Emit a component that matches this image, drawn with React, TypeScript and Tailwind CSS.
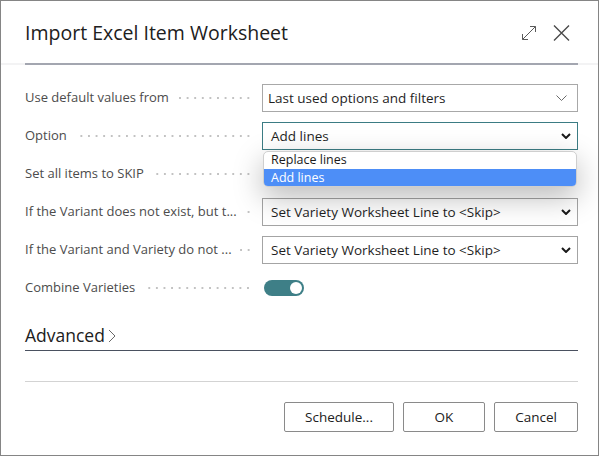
import React from 'react'

const font = "font-['Open_Sans','Noto_Sans',sans-serif]"

function Leader() {
  return (
    <div className="flex-1 h-[4px] ml-[8px] bg-[radial-gradient(circle,#c2c2c2_0.9px,transparent_1.3px)] bg-[length:7.6px_4px] bg-repeat-x bg-right" />
  )
}

function Chevron({ bold }: { bold?: boolean }) {
  if (bold) {
    return (
      <svg width="10" height="6" viewBox="0 0 10 6" className="shrink-0">
        <path d="M1 1 L5 5 L9 1" fill="none" stroke="#1a1a1a" strokeWidth="2" />
      </svg>
    )
  }
  return (
    <svg width="11" height="6" viewBox="0 0 11 6" className="shrink-0">
      <path d="M0.5 0.5 L5.5 5.5 L10.5 0.5" fill="none" stroke="#6b6b6b" strokeWidth="1" />
    </svg>
  )
}

function Row({ label, children }: { label: string; children?: React.ReactNode }) {
  return (
    <div className="flex items-center h-[38px]">
      <div className="w-[227px] flex items-center text-[13px] text-[#4c4c4c]">
        <span className="whitespace-nowrap">{label}</span>
        <Leader />
      </div>
      <div className="ml-[10px] w-[316px] relative">{children}</div>
    </div>
  )
}

function SelectBox({ value, focused }: { value: string; focused?: boolean }) {
  return (
    <div
      className={`h-[28px] flex items-center justify-between pl-[8px] pr-[6px] bg-white border text-[13.5px] text-[#1f1f1f] ${
        focused ? 'border-[#3b7c84]' : 'border-[#a4a4a4]'
      }`}
    >
      <span>{value}</span>
      <Chevron bold />
    </div>
  )
}

function Button({ label, width }: { label: string; width: string }) {
  return (
    <button className={`${width} h-[30px] border border-[#8a8a8a] rounded-[2px] bg-white text-[13.5px] text-[#212121]`}>
      {label}
    </button>
  )
}

export default function App() {
  return (
    <div className={`w-[599px] h-[456px] bg-white border border-[#858585] ${font}`}>
      {/* Header */}
      <div className="h-[62px] flex items-center justify-between pl-[24px] pr-[28px] pt-[2px]">
        <h1 className="text-[19.5px] text-[#202020]">Import Excel Item Worksheet</h1>
        <div className="flex items-center gap-[16px]">
          <svg width="16" height="16" viewBox="0 0 16 16">
            <path d="M1.5 14.5 L14.5 1.5 M9 1.5 H14.5 V7 M1.5 9 V14.5 H7" fill="none" stroke="#5a5a5a" strokeWidth="1" />
          </svg>
          <svg width="17" height="16" viewBox="0 0 17 16">
            <path d="M1 0.5 L16 15.5 M16 0.5 L1 15.5" fill="none" stroke="#4a4a4a" strokeWidth="1.4" />
          </svg>
        </div>
      </div>
      <div className="h-[2px] bg-[#f3f3f4] pl-[24px] pr-[20px]">
        <div className="h-full bg-[#a3a6b0]" />
      </div>

      <div className="pl-[24px] pr-[20px]">
        {/* Fields */}
        <div className="pt-[14px]">
          <Row label="Use default values from">
            <div className="h-[28px] flex items-center justify-between pl-[5px] pr-[10px] border border-[#a8a8a8] text-[13.5px] text-[#1f1f1f]">
              <span>Last used options and filters</span>
              <Chevron />
            </div>
          </Row>
          <Row label="Option">
            <SelectBox value="Add lines" focused />
            <div className="absolute z-10 top-[29px] left-[1px] right-[1px] h-[36px] bg-white border border-[#cfcfcf] rounded-[5px] overflow-hidden shadow-[0_10px_30px_rgba(0,0,0,0.28)] text-[12.5px]">
              <div className="h-[17px] flex items-center pl-[7px] text-[#1a1a1a]">Replace lines</div>
              <div className="h-[18px] flex items-center pl-[7px] bg-[#4d8ef7] text-white">Add lines</div>
            </div>
          </Row>
          <Row label="Set all items to SKIP">
            <div className="w-[40px] h-[16px] ml-[2px] rounded-full border border-[#6b6b6b]" />
          </Row>
          <Row label="If the Variant does not exist, but t...">
            <SelectBox value="Set Variety Worksheet Line to <Skip>" />
          </Row>
          <Row label="If the Variant and Variety do not ...">
            <SelectBox value="Set Variety Worksheet Line to <Skip>" />
          </Row>
          <Row label="Combine Varieties">
            <div className="w-[40px] h-[16px] ml-[2px] rounded-full bg-[#3e7f87] flex items-center justify-end pr-[2px]">
              <div className="w-[12px] h-[12px] rounded-full bg-white" />
            </div>
          </Row>
        </div>

        {/* Advanced */}
        <div className="h-[44px] flex items-end pb-[3px] border-b border-[#4a5160]">
          <span className="text-[17.5px] leading-[24px] text-[#202020]">Advanced</span>
          <svg width="8" height="14" viewBox="0 0 8 14" className="ml-[3px] mb-[4px]">
            <path d="M1 1 L7 7 L1 13" fill="none" stroke="#6a6a6a" strokeWidth="1" />
          </svg>
        </div>

        <div className="mt-[30px] h-px bg-[#d3d3d3]" />

        {/* Actions */}
        <div className="mt-[20px] flex justify-end gap-[9px]">
          <Button label="Schedule..." width="w-[110px]" />
          <Button label="OK" width="w-[82px]" />
          <Button label="Cancel" width="w-[84px]" />
        </div>
      </div>
    </div>
  )
}
